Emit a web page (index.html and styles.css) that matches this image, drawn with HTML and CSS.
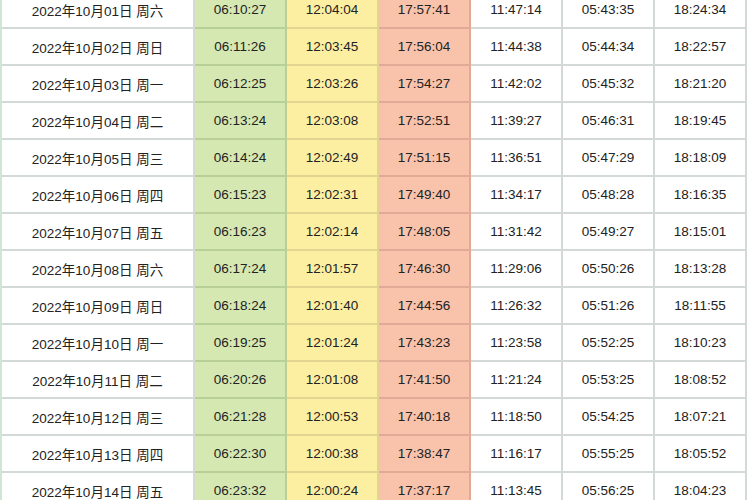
FILE: index.html
```html
<!DOCTYPE html>
<html>
<head>
<meta charset="utf-8">
<link rel="stylesheet" href="styles.css">
</head>
<body>
<div class="frame">
<table class="sun">
<colgroup>
<col class="c-date"><col class="c-t"><col class="c-t"><col class="c-t"><col class="c-t"><col class="c-t"><col class="c-t">
</colgroup>
<tbody>
<tr><td>2022年10月01日 周六</td><td class="g">06:10:27</td><td class="y">12:04:04</td><td class="r">17:57:41</td><td>11:47:14</td><td>05:43:35</td><td>18:24:34</td></tr>
<tr><td>2022年10月02日 周日</td><td class="g">06:11:26</td><td class="y">12:03:45</td><td class="r">17:56:04</td><td>11:44:38</td><td>05:44:34</td><td>18:22:57</td></tr>
<tr><td>2022年10月03日 周一</td><td class="g">06:12:25</td><td class="y">12:03:26</td><td class="r">17:54:27</td><td>11:42:02</td><td>05:45:32</td><td>18:21:20</td></tr>
<tr><td>2022年10月04日 周二</td><td class="g">06:13:24</td><td class="y">12:03:08</td><td class="r">17:52:51</td><td>11:39:27</td><td>05:46:31</td><td>18:19:45</td></tr>
<tr><td>2022年10月05日 周三</td><td class="g">06:14:24</td><td class="y">12:02:49</td><td class="r">17:51:15</td><td>11:36:51</td><td>05:47:29</td><td>18:18:09</td></tr>
<tr><td>2022年10月06日 周四</td><td class="g">06:15:23</td><td class="y">12:02:31</td><td class="r">17:49:40</td><td>11:34:17</td><td>05:48:28</td><td>18:16:35</td></tr>
<tr><td>2022年10月07日 周五</td><td class="g">06:16:23</td><td class="y">12:02:14</td><td class="r">17:48:05</td><td>11:31:42</td><td>05:49:27</td><td>18:15:01</td></tr>
<tr><td>2022年10月08日 周六</td><td class="g">06:17:24</td><td class="y">12:01:57</td><td class="r">17:46:30</td><td>11:29:06</td><td>05:50:26</td><td>18:13:28</td></tr>
<tr><td>2022年10月09日 周日</td><td class="g">06:18:24</td><td class="y">12:01:40</td><td class="r">17:44:56</td><td>11:26:32</td><td>05:51:26</td><td>18:11:55</td></tr>
<tr><td>2022年10月10日 周一</td><td class="g">06:19:25</td><td class="y">12:01:24</td><td class="r">17:43:23</td><td>11:23:58</td><td>05:52:25</td><td>18:10:23</td></tr>
<tr><td>2022年10月11日 周二</td><td class="g">06:20:26</td><td class="y">12:01:08</td><td class="r">17:41:50</td><td>11:21:24</td><td>05:53:25</td><td>18:08:52</td></tr>
<tr><td>2022年10月12日 周三</td><td class="g">06:21:28</td><td class="y">12:00:53</td><td class="r">17:40:18</td><td>11:18:50</td><td>05:54:25</td><td>18:07:21</td></tr>
<tr><td>2022年10月13日 周四</td><td class="g">06:22:30</td><td class="y">12:00:38</td><td class="r">17:38:47</td><td>11:16:17</td><td>05:55:25</td><td>18:05:52</td></tr>
<tr><td>2022年10月14日 周五</td><td class="g">06:23:32</td><td class="y">12:00:24</td><td class="r">17:37:17</td><td>11:13:45</td><td>05:56:25</td><td>18:04:23</td></tr>
</tbody>
</table>
</div>
</body>
</html>
```
FILE: styles.css
```css
html, body {
  margin: 0;
  padding: 0;
  background: #ffffff;
  overflow: hidden;
}
.frame {
  width: 750px;
  height: 500px;
  overflow: hidden;
  border-left: 2px solid #cfe6d2;
  box-sizing: border-box;
}
.sun {
  border-collapse: collapse;
  table-layout: fixed;
  width: 747px;
  margin-top: -10px;
  margin-left: -2px;
  border-right: 2px solid #7fb58a;
  font-family: "Liberation Sans", Arial, "Noto Sans CJK SC", sans-serif;
  font-size: 13.5px;
  color: #222222;
}
.c-date { width: 193px; }
.c-t { width: 92px; }
.sun td {
  height: 35px;
  padding: 0;
  text-align: center;
  vertical-align: middle;
  border: 2px solid #d2d9d6;
}
.sun td.g {
  background: #d5e8b2;
  border-color: #b9cf98;
}
.sun td.y {
  background: #fdefa2;
  border-color: #e2d491;
}
.sun td.r {
  background: #f9c2ab;
  border-color: #dfab97;
}
```
